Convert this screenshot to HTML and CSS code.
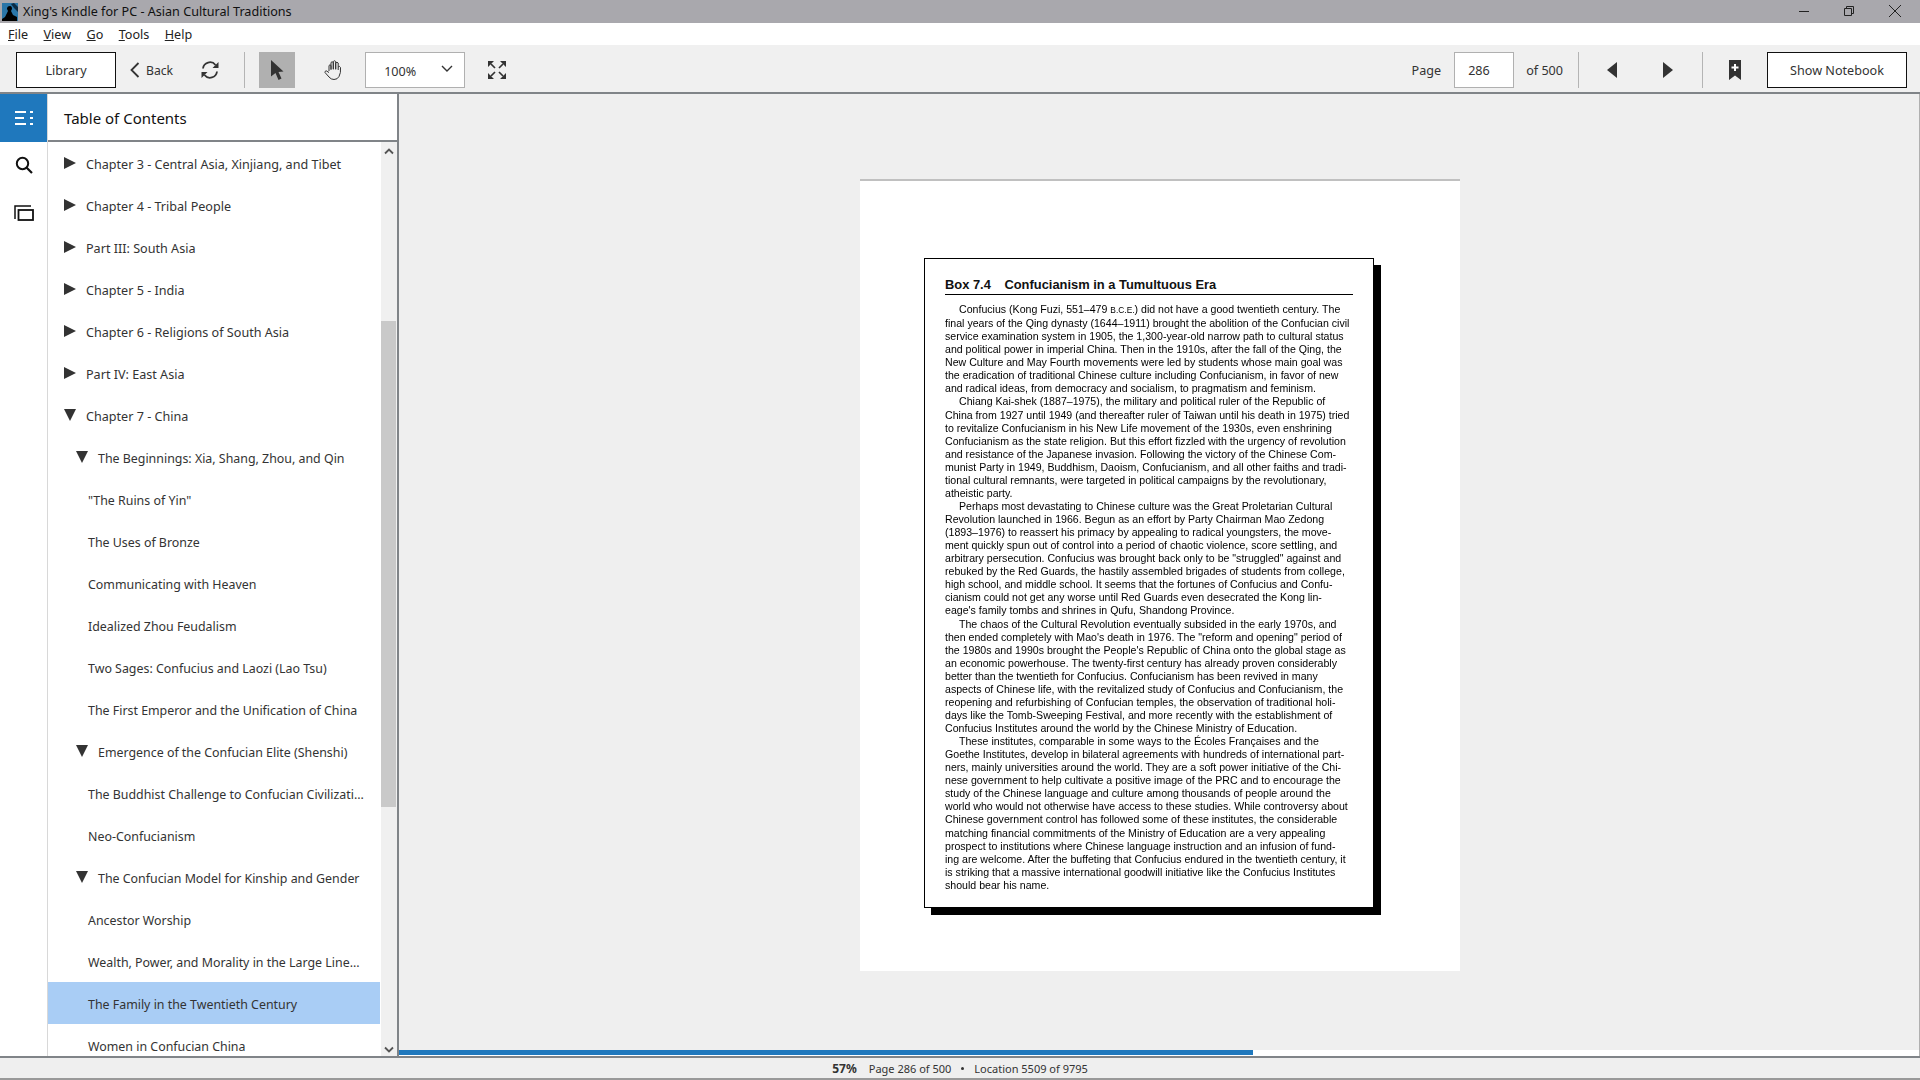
FILE: index.html
```html
<!DOCTYPE html>
<html lang="en">
<head>
    <meta charset="UTF-8">
    <title>Xing's Kindle for PC - Asian Cultural Traditions</title>
    <link rel="stylesheet" href="styles.css">
</head>
<body>
    <div class="title-bar">
        <svg class="app-logo" width="16" height="18" viewBox="0 0 16 18">
            <rect width="16" height="18" fill="#2a76a8"/>
            <path d="M0 18V16L3 14 6 8 5 6Q5 3 8 3 10 3 10 6L9 8 11 12 15 14V18Z" fill="#000"/>
            <path d="M9 1 12 0 16 4V9L12 5Z" fill="#0b2b44"/>
        </svg>
        <span class="title-text">Xing's Kindle for PC - Asian Cultural Traditions</span>
        <div class="window-btns">
            <svg width="12" height="12" viewBox="0 0 12 12"><path d="M1 6.500H11" stroke="#222" fill="none"/></svg>
            <svg width="12" height="12" viewBox="0 0 12 12"><path d="M1.500 3.500H8.500V10.500H1.500ZM3.500 3.500V1.500H10.500V8.500H8.500" stroke="#222" fill="none"/></svg>
            <svg width="14" height="14" viewBox="0 0 14 14"><path d="M1 1 13 13M13 1 1 13" stroke="#222" fill="none"/></svg>
        </div>
    </div>

    <div class="menu-bar">
        <span><u>F</u>ile</span>
        <span><u>V</u>iew</span>
        <span><u>G</u>o</span>
        <span><u>T</u>ools</span>
        <span><u>H</u>elp</span>
    </div>

    <div class="tool-bar">
        <button class="btn-outline btn-library">Library</button>
        <div class="back-btn">
            <svg width="10" height="16" viewBox="0 0 10 16"><path d="M8.500 1 1.500 8 8.500 15" stroke="#333" stroke-width="1.800" fill="none"/></svg>
            <span>Back</span>
        </div>
        <svg class="icon-sync" width="18" height="18" viewBox="0 0 18 18">
            <path d="M2 7.500A7 7 0 0 1 14.500 4M16 10.500A7 7 0 0 1 3.500 14" stroke="#333" stroke-width="1.800" fill="none"/>
            <path d="M17.500 1V7H11.500ZM.5 17V11H6.500Z" fill="#333"/>
        </svg>
        <div class="sep sep-left"></div>
        <div class="cursor-btn">
            <svg width="14" height="20" viewBox="0 0 14 20"><path d="M1 0 13.500 11.500 8.500 12 11.500 18.500 8.500 20 5.500 13 1 16.500Z" fill="#333"/></svg>
        </div>
        <svg class="icon-hand" width="20" height="20" viewBox="0 0 20 20">
            <path d="M5 11V5.500Q6 4 7 5.500V10M7 9V2.500Q8 1 9.300 2.500V9.500M9.300 9V1.500Q10.500 0 11.700 1.500V9.500M11.700 9V3Q13 1.500 14.200 3V10M14.200 7Q15.500 5.500 16.500 7.500 17 13 15 16.500 13.500 19.500 10 19.500 7 19.500 5 17L1 12.500Q.8 11 2.200 10.800L5 12.500" stroke="#333" fill="none"/>
        </svg>
        <div class="zoom-select">
            <span>100%</span>
            <svg width="12" height="8" viewBox="0 0 12 8"><path d="M1 1 6 6 11 1" stroke="#333" stroke-width="1.400" fill="none"/></svg>
        </div>
        <svg class="icon-full" width="18" height="18" viewBox="0 0 18 18">
            <path d="M0 0H6L0 6ZM18 0V6L12 0ZM0 18V12L6 18ZM18 18H12L18 12Z" fill="#333"/>
            <path d="M3 3 7 7M15 3 11 7M3 15 7 11M15 15 11 11" stroke="#333" stroke-width="1.700" fill="none"/>
        </svg>

        <div class="tool-right">
            <span class="page-label">Page</span>
            <div class="page-input">286</div>
            <span class="page-of">of 500</span>
            <div class="sep"></div>
            <svg class="icon-prev" width="10" height="16" viewBox="0 0 10 16"><path d="M10 0V16L0 8Z" fill="#333"/></svg>
            <svg class="icon-next" width="10" height="16" viewBox="0 0 10 16"><path d="M0 0V16L10 8Z" fill="#333"/></svg>
            <div class="sep sep-book"></div>
            <svg class="icon-mark" width="12" height="20" viewBox="0 0 12 20">
                <path d="M0 0H12V20L6 15.500 0 20Z" fill="#333"/>
                <path d="M5 4H7V6.500H9.500V8.500H7V11H5V8.500H2.500V6.500H5Z" fill="#fff"/>
            </svg>
            <button class="btn-outline btn-notebook">Show Notebook</button>
        </div>
    </div>

    <div class="main">
        <div class="rail">
            <div class="rail-tab">
                <svg width="18" height="14" viewBox="0 0 18 14">
                    <path d="M0 1H11M0 7H9M0 13H11M15 1H18M15 7H18M15 13H18" stroke="#fff" stroke-width="1.800" fill="none"/>
                </svg>
            </div>
            <div class="rail-icon rail-search">
                <svg width="18" height="18" viewBox="0 0 18 18"><circle cx="7.500" cy="7.500" r="5.700" stroke="#111" stroke-width="2" fill="none"/><path d="M11.500 11.500 17 17" stroke="#111" stroke-width="2.200"/></svg>
            </div>
            <div class="rail-icon rail-cards">
                <svg width="20" height="16" viewBox="0 0 20 16"><path d="M1 14V1H17" stroke="#111" stroke-width="1.500" fill="none"/><rect x="4.500" y="5" width="14.500" height="10" stroke="#111" stroke-width="1.800" fill="none"/></svg>
            </div>
        </div>

        <div class="toc">
            <div class="toc-head">Table of Contents</div>
            <div class="toc-body">
                <ul class="toc-list">
                    <li class="lvl1 closed">Chapter 3 - Central Asia, Xinjiang, and Tibet</li>
                    <li class="lvl1 closed">Chapter 4 - Tribal People</li>
                    <li class="lvl1 closed">Part III: South Asia</li>
                    <li class="lvl1 closed">Chapter 5 - India</li>
                    <li class="lvl1 closed">Chapter 6 - Religions of South Asia</li>
                    <li class="lvl1 closed">Part IV: East Asia</li>
                    <li class="lvl1 open">Chapter 7 - China</li>
                    <li class="lvl2 open">The Beginnings: Xia, Shang, Zhou, and Qin</li>
                    <li class="leaf">"The Ruins of Yin"</li>
                    <li class="leaf">The Uses of Bronze</li>
                    <li class="leaf">Communicating with Heaven</li>
                    <li class="leaf">Idealized Zhou Feudalism</li>
                    <li class="leaf">Two Sages: Confucius and Laozi (Lao Tsu)</li>
                    <li class="leaf">The First Emperor and the Unification of China</li>
                    <li class="lvl2 open">Emergence of the Confucian Elite (Shenshi)</li>
                    <li class="leaf">The Buddhist Challenge to Confucian Civilizati...</li>
                    <li class="leaf">Neo-Confucianism</li>
                    <li class="lvl2 open">The Confucian Model for Kinship and Gender</li>
                    <li class="leaf">Ancestor Worship</li>
                    <li class="leaf">Wealth, Power, and Morality in the Large Line...</li>
                    <li class="leaf selected">The Family in the Twentieth Century</li>
                    <li class="leaf">Women in Confucian China</li>
                </ul>
                <div class="scroll-track">
                    <svg class="arrow-up" width="10" height="7" viewBox="0 0 10 7"><path d="M1 5.500 5 1.500 9 5.500" stroke="#555" stroke-width="1.800" fill="none"/></svg>
                    <div class="scroll-thumb"></div>
                    <svg class="arrow-down" width="10" height="7" viewBox="0 0 10 7"><path d="M1 1.500 5 5.500 9 1.500" stroke="#555" stroke-width="1.800" fill="none"/></svg>
                </div>
            </div>
        </div>

        <div class="reader">
            <div class="reader-view">
                <div class="page">
                    <div class="box">
                        <h2 class="box-title">Box 7.4 <span class="box-name">Confucianism in a Tumultuous Era</span></h2>
                        <div class="box-text">
                        <p>Confucius (Kong Fuzi, 551–479 <span class="sc">B.C.E.</span>) did not have a good twentieth century. The<br>
final years of the Qing dynasty (1644–1911) brought the abolition of the Confucian civil<br>
service examination system in 1905, the 1,300-year-old narrow path to cultural status<br>
and political power in imperial China. Then in the 1910s, after the fall of the Qing, the<br>
New Culture and May Fourth movements were led by students whose main goal was<br>
the eradication of traditional Chinese culture including Confucianism, in favor of new<br>
and radical ideas, from democracy and socialism, to pragmatism and feminism.</p>
                        <p>Chiang Kai-shek (1887–1975), the military and political ruler of the Republic of<br>
China from 1927 until 1949 (and thereafter ruler of Taiwan until his death in 1975) tried<br>
to revitalize Confucianism in his New Life movement of the 1930s, even enshrining<br>
Confucianism as the state religion. But this effort fizzled with the urgency of revolution<br>
and resistance of the Japanese invasion. Following the victory of the Chinese Com-<br>
munist Party in 1949, Buddhism, Daoism, Confucianism, and all other faiths and tradi-<br>
tional cultural remnants, were targeted in political campaigns by the revolutionary,<br>
atheistic party.</p>
                        <p>Perhaps most devastating to Chinese culture was the Great Proletarian Cultural<br>
Revolution launched in 1966. Begun as an effort by Party Chairman Mao Zedong<br>
(1893–1976) to reassert his primacy by appealing to radical youngsters, the move-<br>
ment quickly spun out of control into a period of chaotic violence, score settling, and<br>
arbitrary persecution. Confucius was brought back only to be "struggled" against and<br>
rebuked by the Red Guards, the hastily assembled brigades of students from college,<br>
high school, and middle school. It seems that the fortunes of Confucius and Confu-<br>
cianism could not get any worse until Red Guards even desecrated the Kong lin-<br>
eage's family tombs and shrines in Qufu, Shandong Province.</p>
                        <p>The chaos of the Cultural Revolution eventually subsided in the early 1970s, and<br>
then ended completely with Mao's death in 1976. The "reform and opening" period of<br>
the 1980s and 1990s brought the People's Republic of China onto the global stage as<br>
an economic powerhouse. The twenty-first century has already proven considerably<br>
better than the twentieth for Confucius. Confucianism has been revived in many<br>
aspects of Chinese life, with the revitalized study of Confucius and Confucianism, the<br>
reopening and refurbishing of Confucian temples, the observation of traditional holi-<br>
days like the Tomb-Sweeping Festival, and more recently with the establishment of<br>
Confucius Institutes around the world by the Chinese Ministry of Education.</p>
                        <p>These institutes, comparable in some ways to the Écoles Françaises and the<br>
Goethe Institutes, develop in bilateral agreements with hundreds of international part-<br>
ners, mainly universities around the world. They are a soft power initiative of the Chi-<br>
nese government to help cultivate a positive image of the PRC and to encourage the<br>
study of the Chinese language and culture among thousands of people around the<br>
world who would not otherwise have access to these studies. While controversy about<br>
Chinese government control has followed some of these institutes, the considerable<br>
matching financial commitments of the Ministry of Education are a very appealing<br>
prospect to institutions where Chinese language instruction and an infusion of fund-<br>
ing are welcome. After the buffeting that Confucius endured in the twentieth century, it<br>
is striking that a massive international goodwill initiative like the Confucius Institutes<br>
should bear his name.</p>
                        </div>
                    </div>
                </div>
            </div>
            <div class="progress"><div class="progress-fill"></div></div>
        </div>
    </div>

    <div class="status-bar">
        <b>57%</b>
        <span class="status-page">Page 286 of 500</span>
        <span class="status-dot"></span>
        <span>Location 5509 of 9795</span>
    </div>
</body>
</html>
```

FILE: styles.css
```css
* {
    box-sizing: border-box;
}
body {
    margin: 0;
    width: 1920px;
    height: 1080px;
    overflow: hidden;
    font-family: "Noto Sans", sans-serif;
    font-size: 12.6px;
    color: #333;
    background-color: #f0f0f0;
    display: flex;
    flex-direction: column;
}

/* Title bar */
.title-bar {
    height: 23px;
    background-color: #a9a8ad;
    display: flex;
    align-items: center;
    padding-left: 2px;
    color: #111;
}
.app-logo {
    margin-right: 5px;
}
.title-text {
    margin-top: -1px;
}
.window-btns {
    margin-left: auto;
    display: flex;
    align-items: center;
    gap: 33px;
    padding-right: 18px;
    margin-top: -2px;
}

/* Menu */
.menu-bar {
    height: 22px;
    background-color: #fff;
    display: flex;
    align-items: center;
    gap: 15.4px;
    padding-left: 8px;
    padding-top: 1px;
    color: #222;
}

/* Toolbar */
.tool-bar {
    height: 49px;
    background-color: #f0f0f0;
    border-bottom: 2px solid #808488;
    display: flex;
    align-items: center;
    padding-top: 3px;
    padding-left: 16px;
}
.btn-outline {
    height: 36px;
    background-color: #fff;
    border: 1px solid #111;
    font-family: inherit;
    font-size: 12.6px;
    color: #333;
    padding: 0;
}
.btn-library {
    width: 100px;
}
.back-btn {
    display: flex;
    align-items: center;
    gap: 6px;
    margin-left: 14px;
    font-size: 12.2px;
    color: #333;
}
.icon-sync {
    margin-left: 28px;
}
.sep {
    width: 1px;
    height: 36px;
    background-color: #b4b4b4;
}
.sep-left {
    margin-left: 25px;
}
.cursor-btn {
    width: 36px;
    height: 36px;
    margin-left: 14px;
    background-color: #b0b0b0;
    display: flex;
    align-items: center;
    justify-content: center;
}
.icon-hand {
    margin-left: 29px;
}
.zoom-select {
    width: 100px;
    height: 36px;
    margin-left: 21px;
    background-color: #fff;
    border: 1px solid #b0b0b0;
    display: flex;
    align-items: center;
    padding-left: 18px;
    padding-top: 2px;
}
.zoom-select svg {
    margin-left: 25px;
    margin-top: -4px;
}
.icon-full {
    margin-left: 23px;
}
.tool-right {
    margin-left: auto;
    display: flex;
    align-items: center;
    padding-right: 13px;
}
.page-input {
    width: 60px;
    height: 36px;
    margin-left: 13px;
    background-color: #fff;
    border: 1px solid #b0b0b0;
    padding-left: 13px;
    line-height: 36px;
}
.page-of {
    margin-left: 12px;
    margin-right: 15px;
}
.icon-prev {
    margin-left: 28px;
}
.icon-next {
    margin-left: 46px;
}
.sep-book {
    margin-left: 29px;
}
.icon-mark {
    margin-left: 26px;
}
.btn-notebook {
    width: 140px;
    margin-left: 26px;
}

/* Main area */
.main {
    flex: 1;
    display: flex;
    min-height: 0;
}
.rail {
    width: 48px;
    background-color: #fff;
    border-right: 1px solid #d8d8d8;
}
.rail-tab {
    width: 47px;
    height: 48px;
    background-color: #1f78bd;
    display: flex;
    align-items: center;
    justify-content: center;
}
.rail-icon {
    display: flex;
    align-items: center;
    justify-content: center;
}
.rail-search {
    height: 45px;
}
.rail-cards {
    height: 52px;
}
.toc {
    width: 351px;
    background-color: #fff;
    border-right: 2px solid #808488;
    display: flex;
    flex-direction: column;
}
.toc-head {
    height: 48px;
    border-bottom: 2px solid #808488;
    padding-left: 16px;
    font-size: 15px;
    line-height: 49px;
    color: #111;
}
.toc-body {
    flex: 1;
    display: flex;
    min-height: 0;
}
.toc-list {
    flex: 1;
    list-style: none;
    margin: 0;
    padding: 0;
    overflow: hidden;
}
.toc-list li {
    height: 42px;
    line-height: 46px;
    white-space: nowrap;
    position: relative;
}
.lvl1 {
    padding-left: 38px;
}
.lvl2 {
    padding-left: 50px;
    font-size: 12.4px;
}
.leaf {
    padding-left: 40px;
    font-size: 12.4px;
}
.toc-list .selected {
    background-color: #a9cdf5;
    margin-right: 1px;
}
.closed::before,
.open::before {
    content: "";
    position: absolute;
    top: 15px;
    border-style: solid;
}
.closed::before {
    left: 16px;
    border-width: 6px 0 6px 12px;
    border-color: transparent transparent transparent #333;
}
.open::before {
    left: 16px;
    border-width: 12px 6px 0 6px;
    border-color: #333 transparent transparent transparent;
}
.lvl2.open::before {
    left: 28px;
}
.scroll-track {
    width: 16px;
    background-color: #f0f0f0;
    position: relative;
}
.arrow-up {
    position: absolute;
    top: 6px;
    left: 3px;
}
.arrow-down {
    position: absolute;
    bottom: 3px;
    left: 3px;
}
.scroll-thumb {
    position: absolute;
    top: 179px;
    left: 0;
    width: 15px;
    height: 486px;
    background-color: #c9c9c9;
}

/* Reader */
.reader {
    flex: 1;
    display: flex;
    flex-direction: column;
    border-right: 1px solid #b0b0b0;
    background-color: #efefef;
}
.reader-view {
    flex: 1;
    display: flex;
    justify-content: center;
    padding-top: 85px;
    padding-left: 2px;
    min-height: 0;
}
.page {
    width: 600px;
    height: 792px;
    background-color: #fff;
    border-top: 2px solid #c0c0c0;
    padding: 77px 0 0 64px;
}
.box {
    width: 450px;
    height: 650px;
    background-color: #fff;
    border: 1px solid #000;
    box-shadow: 7px 7px 0 #000;
    padding: 16px 0 0 20px;
    font-family: "Liberation Sans", Arial, sans-serif;
    white-space: nowrap;
}
.box-title {
    width: 408px;
    margin: 0 0 8px 0;
    border-bottom: 1px solid #000;
    font-size: 12.9px;
    line-height: 19px;
    color: #111;
}
.box-name {
    margin-left: 10px;
}
.box-text {
    font-size: 10.6px;
    line-height: 13.07px;
    color: #000;
    filter: blur(0.25px);
}
.box p {
    margin: 0;
    text-indent: 14px;
}
.sc {
    font-size: 8.4px;
}
.progress {
    height: 6px;
    background-color: #fff;
}
.progress-fill {
    width: 854px;
    height: 5px;
    background-color: #1f78bd;
}

/* Status bar */
.status-bar {
    height: 24px;
    border-top: 2px solid #808488;
    border-bottom: 2px solid #999;
    background-color: #efefef;
    display: flex;
    align-items: center;
    justify-content: center;
    font-size: 11px;
    color: #333;
}
.status-bar b {
    font-size: 12px;
}
.status-page {
    margin-left: 12px;
}
.status-dot {
    width: 3px;
    height: 3px;
    margin: 0 10px;
    background-color: #333;
    border-radius: 50%;
}
```
